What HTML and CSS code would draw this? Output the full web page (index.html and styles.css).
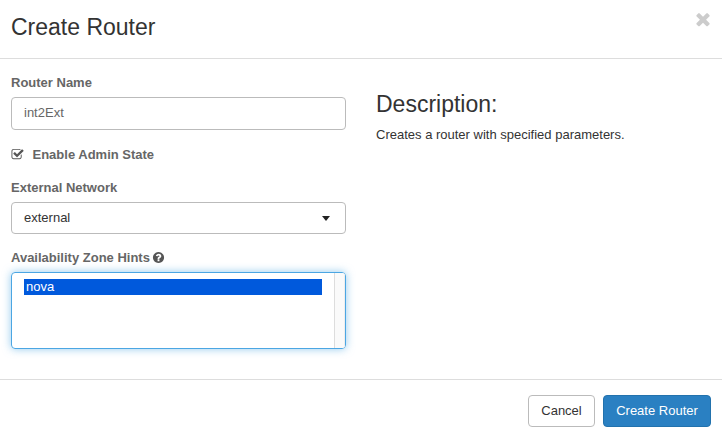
FILE: index.html
```html
<!DOCTYPE html>
<html lang="en">
<head>
<meta charset="utf-8">
<title>Create Router</title>
<link rel="stylesheet" href="styles.css">
</head>
<body>
<form class="modal">
  <header class="modal-header">
    <h3 class="title">Create Router</h3>
    <svg class="close" viewBox="0 0 1792 1792"><path d="M1490 1322q0 40-28 68l-136 136q-28 28-68 28t-68-28l-294-294-294 294q-28 28-68 28t-68-28l-136-136q-28-28-28-68t28-68l294-294-294-294q-28-28-28-68t28-68l136-136q28-28 68-28t68 28l294 294 294-294q28-28 68-28t68 28l136 136q28 28 28 68t-28 68l-294 294 294 294q28 28 28 68z"/></svg>
  </header>
  <div class="modal-body">
    <div class="fields">
      <div class="label">Router Name</div>
      <div class="control name-input">int2Ext</div>
      <div class="label check-row">
        <svg class="check-icon" viewBox="0 0 1792 1792"><path d="M1472 930v318q0 119-84.500 203.500t-203.500 84.500h-832q-119 0-203.500-84.500t-84.500-203.500v-832q0-119 84.500-203.500t203.500-84.500h832q63 0 117 25 15 7 18 23 3 17-9 29l-49 49q-10 10-23 10-3 0-9-2-23-6-45-6h-832q-66 0-113 47t-47 113v832q0 66 47 113t113 47h832q66 0 113-47t47-113v-254q0-13 9-22l64-64q10-10 23-10 6 0 12 3 20 8 20 29zm231-489l-814 814q-24 24-57 24t-57-24l-430-430q-24-24-24-57t24-57l110-110q24-24 57-24t57 24l263 263 647-647q24-24 57-24t57 24l110 110q24 24 24 57t-24 57z"/></svg>
        <span>Enable Admin State</span>
      </div>
      <div class="label">External Network</div>
      <div class="control select"><span>external</span><i class="caret"></i></div>
      <div class="label hints-label">
        <span>Availability Zone Hints</span>
        <svg class="help-icon" viewBox="0 0 1792 1792"><path d="M1024 1376v-192q0-14-9-23t-23-9h-192q-14 0-23 9t-9 23v192q0 14 9 23t23 9h192q14 0 23-9t9-23zm256-672q0-88-55.500-163t-138.500-116-170-41q-243 0-371 213-15 24 8 42l132 100q7 6 19 6 16 0 25-12 53-68 86-92 34-24 86-24 48 0 85.500 26t37.500 59q0 38-20 61t-68 45q-63 28-115.500 86.500t-52.500 125.500v36q0 14 9 23t23 9h192q14 0 23-9t9-23q0-19 21.500-49.500t54.500-49.500q32-18 49-28.500t46-35 44.500-48 28-60.500 12.500-81zm384 192q0 209-103 385.500t-279.500 279.500-385.500 103-385.500-103-279.500-279.500-103-385.500 103-385.500 279.500-279.500 385.500-103 385.500 103 279.500 279.500 103 385.500z"/></svg>
      </div>
      <div class="listbox">
        <div class="options"><div class="option">nova</div></div>
        <div class="track"></div>
      </div>
    </div>
    <div class="description">
      <h3 class="title">Description:</h3>
      <p class="text">Creates a router with specified parameters.</p>
    </div>
  </div>
  <footer class="modal-footer">
    <button type="button" class="btn cancel">Cancel</button>
    <button type="button" class="btn primary">Create Router</button>
  </footer>
</form>
</body>
</html>
```
FILE: styles.css
```css
* { box-sizing: border-box; }
body {
  margin: 0;
  background: #fff;
  color: #333;
  font: 13px/18px "Liberation Sans", Arial, sans-serif;
}
.modal { height: 438px; display: flex; flex-direction: column; }
.modal-header {
  height: 59px;
  padding: 14px 9px 0 11px;
  display: flex;
  justify-content: space-between;
  border-bottom: 1px solid #ddd;
}
.title { margin: 0; font-size: 23px; line-height: 26px; font-weight: 400; }
.close { width: 20px; height: 20px; margin-top: -5px; fill: #ccc; }
.modal-body {
  height: 320px;
  padding: 15px 11px 0;
  display: grid;
  grid-template-columns: 335px 335px;
  column-gap: 30px;
}
.label { height: 18px; margin-bottom: 5px; color: #666; font-weight: 700; display: flex; align-items: center; white-space: nowrap; }
.control { border: 1px solid #bbb; border-radius: 4px; padding: 0 12px; display: flex; align-items: center; }
.name-input { height: 33px; padding-bottom: 2px; color: #666; margin-bottom: 16px; }
.check-row { margin-bottom: 15px; }
.check-icon { width: 13px; height: 13px; margin: 0 9px 2px -.5px; fill: #555; }
.select { height: 32px; justify-content: space-between; margin-bottom: 15px; }
.caret { border: 4px solid transparent; border-top: 5px solid #222; border-bottom: 0; margin-right: 3px; }
.hints-label { gap: 2px; }
.help-icon { width: 13px; height: 13px; margin-bottom: 2px; fill: #555; }
.listbox {
  height: 77px;
  display: flex;
  overflow: hidden;
  border: 1px solid #4ba6e3;
  border-radius: 4px;
  box-shadow: 0 0 8px rgba(75, 166, 227, .6);
}
.options { flex: 1; padding: 6px 12px; }
.option { height: 16px; padding-left: 2px; line-height: 16px; background: #0059dc; color: #fff; }
.track { width: 11px; background: #fafafa; border-left: 1px solid #ddd; border-right: 1px solid #eee; }
.description { padding-top: 17px; }
.text { margin: 9px 0 0; white-space: nowrap; }
.modal-footer {
  height: 59px;
  padding: 15px 11px 0;
  display: flex;
  justify-content: flex-end;
  gap: 8px;
  border-top: 1px solid #ddd;
}
.btn { height: 32px; padding: 0; border: 1px solid #bbb; border-radius: 4px; background: #fff; color: #333; font: inherit; }
.cancel { width: 67px; }
.primary { width: 108px; background: #2a80c2; border-color: #2272ad; color: #fff; }
```
